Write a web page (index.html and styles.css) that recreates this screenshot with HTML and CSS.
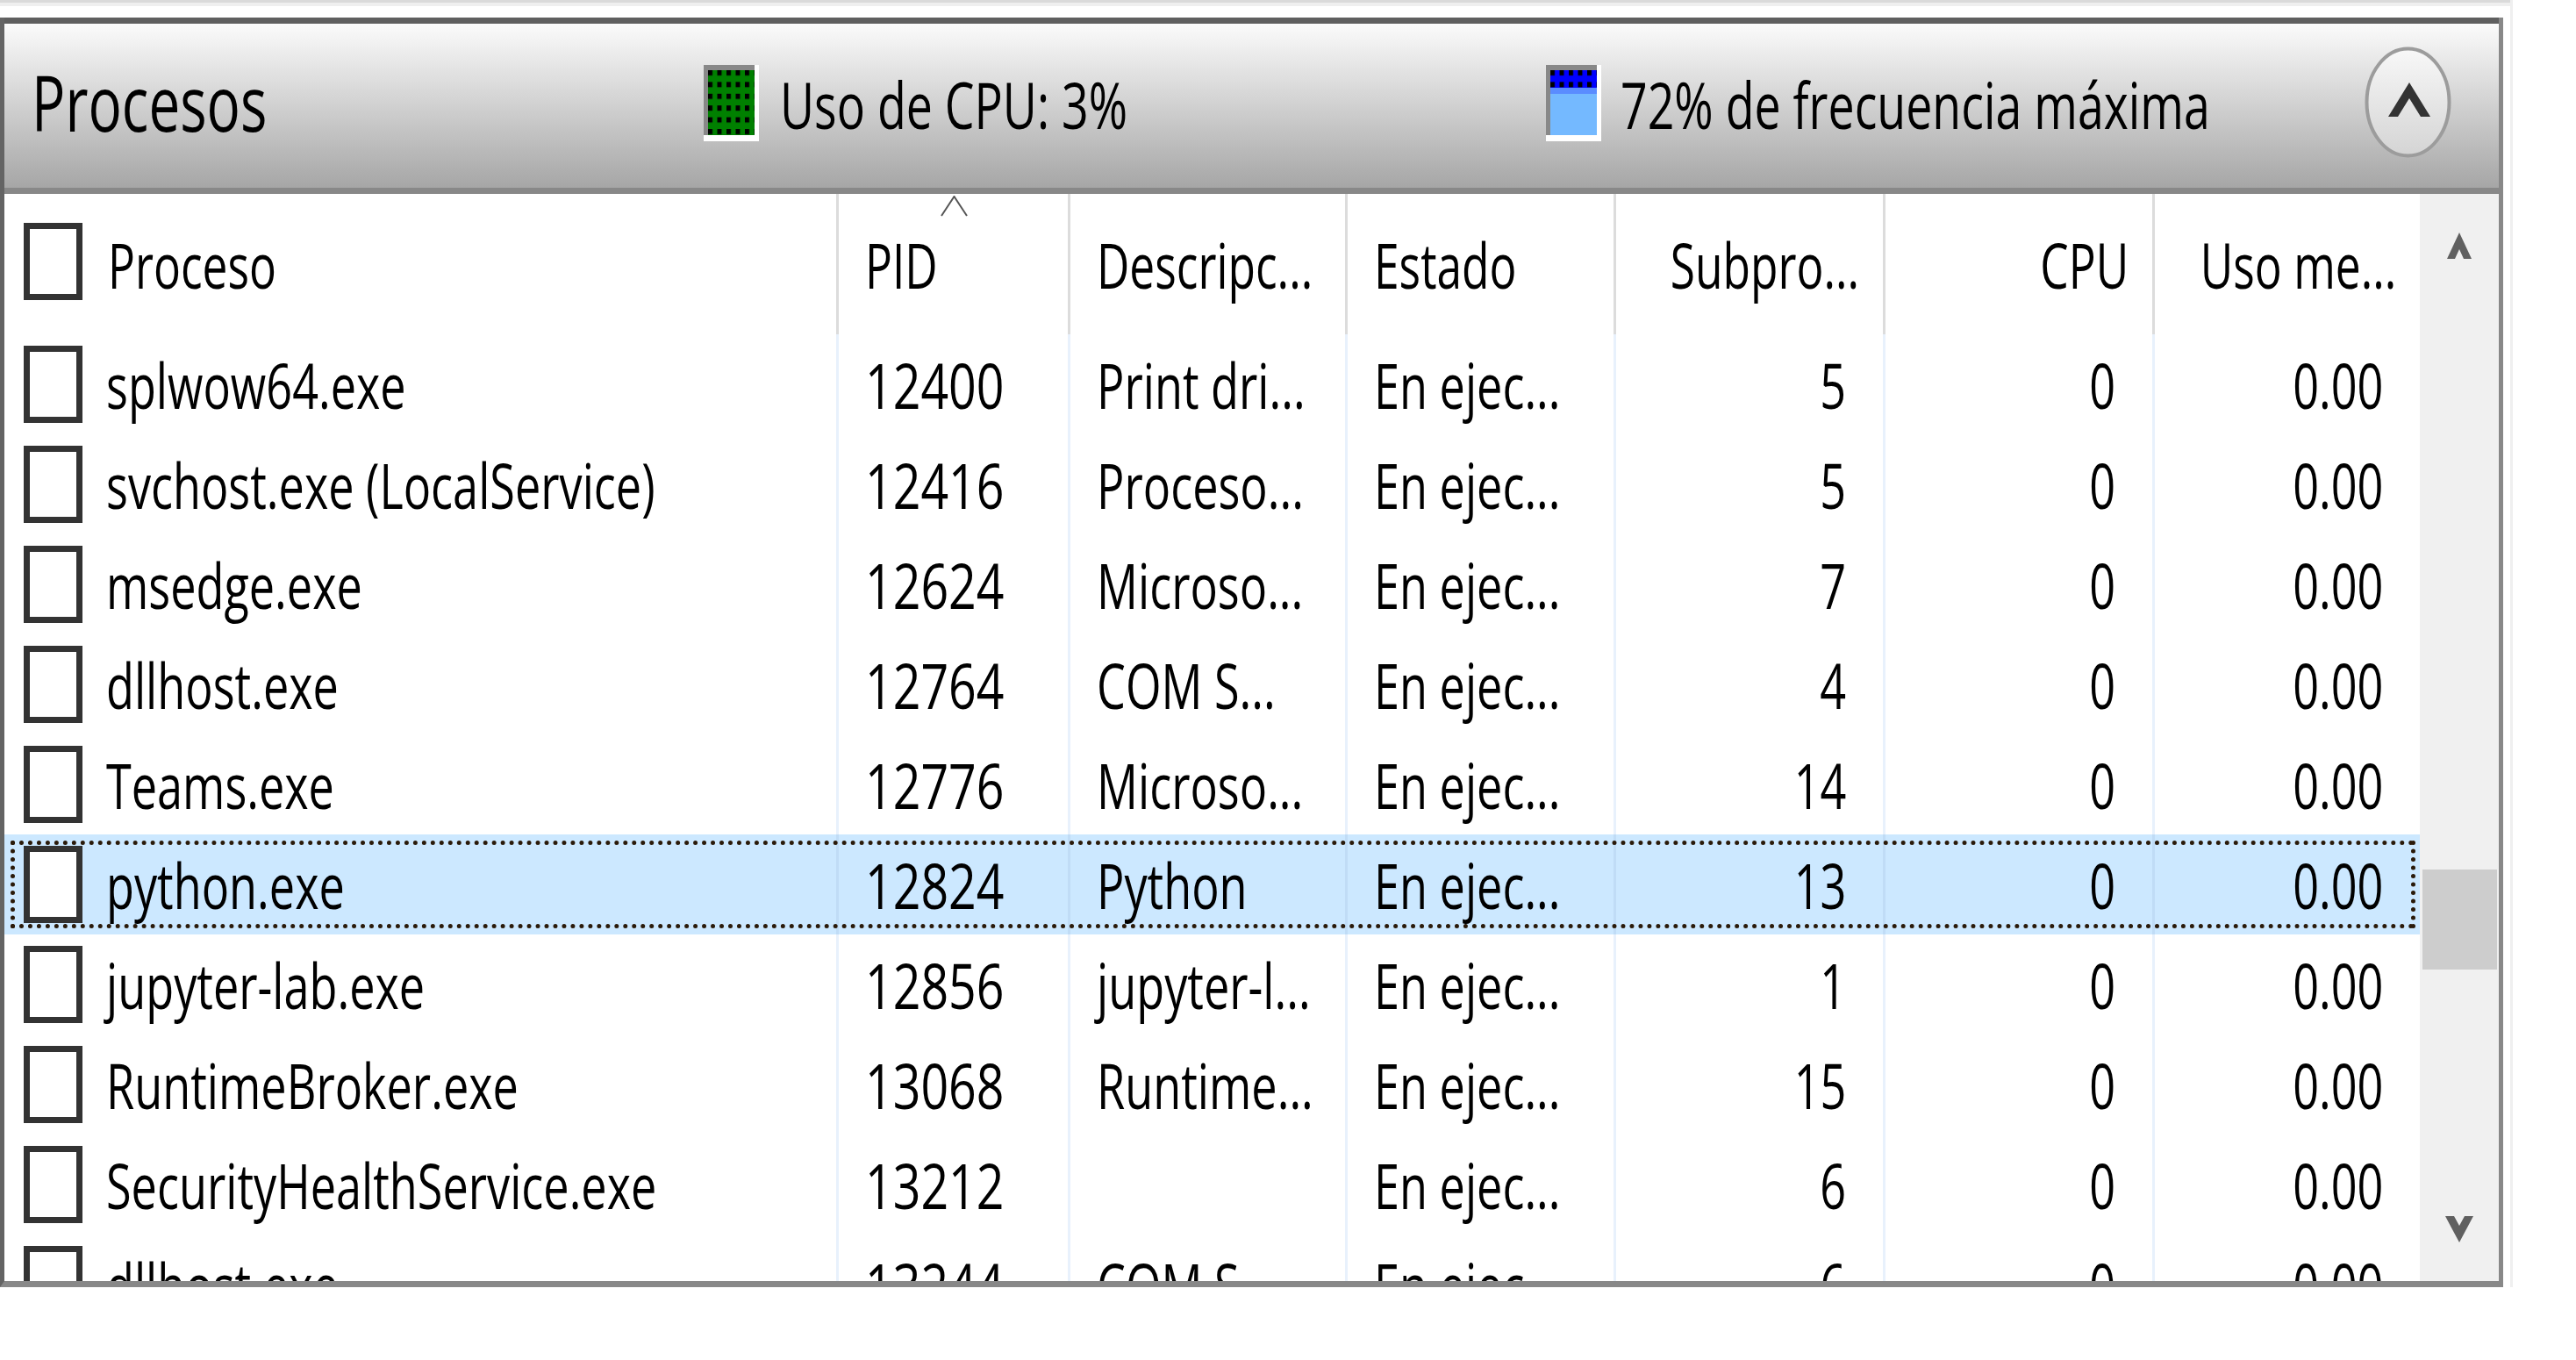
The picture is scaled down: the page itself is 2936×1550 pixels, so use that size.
FILE: index.html
```html
<!DOCTYPE html>
<html lang="es">
<head>
<meta charset="utf-8">
<title>Procesos</title>
<link rel="stylesheet" href="styles.css">
</head>
<body>
<div class="frame">
  <div class="frame-top"></div>
  <div class="panel">
    <div class="hdr">
      <div class="hdr-title"><span class="t">Procesos</span></div>
      <svg class="meter" width="63" height="87" viewBox="0 0 63 87">
        <defs><pattern id="dg" x="5" y="6" width="10.5" height="13.4" patternUnits="userSpaceOnUse"><rect width="5" height="6" fill="#000"/></pattern></defs>
        <rect width="63" height="87" fill="#fff"/>
        <rect width="58" height="80" fill="#888"/>
        <rect x="5" y="6" width="53" height="74" fill="#008000"/>
        <rect x="5" y="6" width="53" height="74" fill="url(#dg)"/>
      </svg>
      <div class="hdr-stat"><span class="t">Uso de CPU: 3%</span></div>
      <svg class="meter" width="63" height="87" viewBox="0 0 63 87">
        <defs><pattern id="db" x="5" y="6" width="10.5" height="13.4" patternUnits="userSpaceOnUse"><rect width="5" height="6" fill="#000"/></pattern></defs>
        <rect width="63" height="87" fill="#fff"/>
        <rect width="58" height="80" fill="#888"/>
        <rect x="5" y="6" width="53" height="74" fill="#74b9ff"/>
        <rect x="5" y="26" width="53" height="7" fill="#5a8cff"/>
        <rect x="5" y="6" width="53" height="20" fill="#0000ff"/>
        <rect x="5" y="6" width="53" height="20" fill="url(#db)"/>
      </svg>
      <div class="hdr-stat2"><span class="t">72% de frecuencia máxima</span></div>
      <svg class="collapse" width="99" height="127" viewBox="0 0 99 127">
        <defs><linearGradient id="cbg" x1="0" y1="0" x2="0" y2="1"><stop offset="0" stop-color="#f8f8f8"/><stop offset="1" stop-color="#d4d4d4"/></linearGradient></defs>
        <ellipse cx="49.5" cy="63.5" rx="47" ry="61" fill="url(#cbg)" stroke="#9c9c9c" stroke-width="4"/>
        <path d="M27 80 L51 41 L75 80 L64 80 L51 59 L38 80 Z" fill="#333"/>
      </svg>
    </div>
    <div class="body">
      <div class="list">
        <div class="row head">
          <div class="c first"><span class="box"></span><span class="t">Proceso</span></div>
          <div class="c pid"><svg class="sort" width="31" height="24" viewBox="0 0 31 24"><polyline points="1,23 15.5,1 30,23" fill="none" stroke="#555" stroke-width="2"/></svg><span class="t">PID</span></div>
          <div class="c"><span class="t">Descripc...</span></div>
          <div class="c"><span class="t">Estado</span></div>
          <div class="c r"><span class="t">Subpro...</span></div>
          <div class="c r"><span class="t">CPU</span></div>
          <div class="c r"><span class="t">Uso me...</span></div>
        </div>
        <div class="row">
          <div class="c first"><span class="box"></span><span class="t">splwow64.exe</span></div>
          <div class="c"><span class="t num">12400</span></div>
          <div class="c"><span class="t">Print dri...</span></div>
          <div class="c"><span class="t">En ejec...</span></div>
          <div class="c r"><span class="t">5</span></div>
          <div class="c r"><span class="t">0</span></div>
          <div class="c r"><span class="t">0.00</span></div>
        </div>
        <div class="row">
          <div class="c first"><span class="box"></span><span class="t">svchost.exe (LocalService)</span></div>
          <div class="c"><span class="t num">12416</span></div>
          <div class="c"><span class="t">Proceso...</span></div>
          <div class="c"><span class="t">En ejec...</span></div>
          <div class="c r"><span class="t">5</span></div>
          <div class="c r"><span class="t">0</span></div>
          <div class="c r"><span class="t">0.00</span></div>
        </div>
        <div class="row">
          <div class="c first"><span class="box"></span><span class="t">msedge.exe</span></div>
          <div class="c"><span class="t num">12624</span></div>
          <div class="c"><span class="t">Microso...</span></div>
          <div class="c"><span class="t">En ejec...</span></div>
          <div class="c r"><span class="t">7</span></div>
          <div class="c r"><span class="t">0</span></div>
          <div class="c r"><span class="t">0.00</span></div>
        </div>
        <div class="row">
          <div class="c first"><span class="box"></span><span class="t">dllhost.exe</span></div>
          <div class="c"><span class="t num">12764</span></div>
          <div class="c"><span class="t">COM S...</span></div>
          <div class="c"><span class="t">En ejec...</span></div>
          <div class="c r"><span class="t">4</span></div>
          <div class="c r"><span class="t">0</span></div>
          <div class="c r"><span class="t">0.00</span></div>
        </div>
        <div class="row">
          <div class="c first"><span class="box"></span><span class="t">Teams.exe</span></div>
          <div class="c"><span class="t num">12776</span></div>
          <div class="c"><span class="t">Microso...</span></div>
          <div class="c"><span class="t">En ejec...</span></div>
          <div class="c r"><span class="t">14</span></div>
          <div class="c r"><span class="t">0</span></div>
          <div class="c r"><span class="t">0.00</span></div>
        </div>
        <div class="row sel">
          <div class="c first"><span class="box"></span><span class="t">python.exe</span></div>
          <div class="c"><span class="t num">12824</span></div>
          <div class="c"><span class="t">Python</span></div>
          <div class="c"><span class="t">En ejec...</span></div>
          <div class="c r"><span class="t">13</span></div>
          <div class="c r"><span class="t">0</span></div>
          <div class="c r"><span class="t">0.00</span></div>
        </div>
        <div class="row">
          <div class="c first"><span class="box"></span><span class="t">jupyter-lab.exe</span></div>
          <div class="c"><span class="t num">12856</span></div>
          <div class="c"><span class="t">jupyter-l...</span></div>
          <div class="c"><span class="t">En ejec...</span></div>
          <div class="c r"><span class="t">1</span></div>
          <div class="c r"><span class="t">0</span></div>
          <div class="c r"><span class="t">0.00</span></div>
        </div>
        <div class="row">
          <div class="c first"><span class="box"></span><span class="t">RuntimeBroker.exe</span></div>
          <div class="c"><span class="t num">13068</span></div>
          <div class="c"><span class="t">Runtime...</span></div>
          <div class="c"><span class="t">En ejec...</span></div>
          <div class="c r"><span class="t">15</span></div>
          <div class="c r"><span class="t">0</span></div>
          <div class="c r"><span class="t">0.00</span></div>
        </div>
        <div class="row">
          <div class="c first"><span class="box"></span><span class="t">SecurityHealthService.exe</span></div>
          <div class="c"><span class="t num">13212</span></div>
          <div class="c"><span class="t"></span></div>
          <div class="c"><span class="t">En ejec...</span></div>
          <div class="c r"><span class="t">6</span></div>
          <div class="c r"><span class="t">0</span></div>
          <div class="c r"><span class="t">0.00</span></div>
        </div>
        <div class="row">
          <div class="c first"><span class="box"></span><span class="t">dllhost.exe</span></div>
          <div class="c"><span class="t num">13244</span></div>
          <div class="c"><span class="t">COM S...</span></div>
          <div class="c"><span class="t">En ejec...</span></div>
          <div class="c r"><span class="t">6</span></div>
          <div class="c r"><span class="t">0</span></div>
          <div class="c r"><span class="t">0.00</span></div>
        </div>
      </div>
      <div class="sb">
        <svg class="sb-up" width="28" height="30" viewBox="0 0 28 30"><path d="M0 30 L14 0 L28 30 L19 30 L14 19 L9 30 Z" fill="#606060"/></svg>
        <div class="sb-thumb"></div>
        <svg class="sb-down" width="32" height="30" viewBox="0 0 32 30"><path d="M0 0 L16 30 L32 0 L22 0 L16 11 L10 0 Z" fill="#606060"/></svg>
      </div>
    </div>
  </div>
</div>
</body>
</html>
```
FILE: styles.css
```css
* { box-sizing: border-box; }
body {
  margin: 0;
  background: #fff;
  color: #000;
  font-family: "Open Sans", "Noto Sans", "Liberation Sans", sans-serif;
}
.frame {
  width: 2864px;
  border-right: 3px solid #efefef;
}
.frame-top {
  height: 7px;
  background: linear-gradient(#dadada 0 3px, #efefef 3px 7px);
}
.panel {
  margin-top: 13px;
  width: 2853px;
  border-left: 5px solid #646464;
  border-right: 5px solid #888;
  border-bottom: 7px solid #888;
}
.hdr {
  height: 201px;
  border-top: 7px solid #5f5f5f;
  border-bottom: 7px solid #888;
  background: linear-gradient(#fbfbfb, #a6a6a6);
  display: flex;
  align-items: center;
}
.t {
  display: inline-block;
  white-space: nowrap;
  line-height: 1;
  transform: scaleX(0.725);
  transform-origin: 0 50%;
}
.t.num { transform: scaleX(0.77); }
.hdr-title {
  width: 797px;
  padding-left: 31px;
  font-size: 88px;
  margin-top: -9px;
}
.meter { flex: none; display: block; margin-top: -7px; }
.hdr-stat {
  margin-left: 24px;
  width: 873px;
  font-size: 74px;
  margin-top: -4px;
}
.hdr-stat2 {
  margin-left: 22px;
  width: 848px;
  font-size: 74px;
  margin-top: -4px;
}
.collapse { flex: none; display: block; margin-top: -8px; }

.body {
  display: flex;
  height: 1239px;
}
.list {
  width: 2753px;
  overflow: hidden;
}
.row {
  display: grid;
  grid-template-columns: 948px 264px 316px 306px 307px 307px 305px;
  height: 114px;
  font-size: 72px;
  position: relative;
}
.row.head {
  height: 160px;
  font-size: 71px;
}
.c {
  display: flex;
  align-items: center;
  border-left: 3px solid #e8f1fc;
  padding-left: 30px;
  overflow: hidden;
  position: relative;
}
.head .c { border-left-color: #dcdcdc; }
.c.first {
  border-left: 0;
  padding-left: 22px;
}
.c.r {
  justify-content: flex-end;
  padding-left: 0;
  padding-right: 42px;
}
.head .c.r { padding-right: 27px; }
.r .t { transform-origin: 100% 50%; }
.box {
  flex: none;
  width: 67px;
  height: 88px;
  border: 7px solid #333;
  background: #fff;
  margin-right: 27px;
}
.head .box {
  margin-right: 29px;
  margin-top: -6px;
}
.sort {
  position: absolute;
  left: 116px;
  top: 2px;
}
.sel { background: #cce8ff; }
.sel .c { border-left-color: #c0dcf6; }
.sel::after {
  content: "";
  position: absolute;
  left: 7px;
  right: 5px;
  top: 7px;
  bottom: 7px;
  border: 5px dotted #2a1a0a;
  pointer-events: none;
}
.sb {
  width: 90px;
  flex: none;
  background: #f0f0f0;
  display: flex;
  flex-direction: column;
  align-items: center;
}
.sb-up { display: block; margin-top: 44px; }
.sb-thumb {
  margin-top: 696px;
  width: 85px;
  height: 114px;
  background: #cdcdcd;
}
.sb-down { display: block; margin-top: 281px; }
```
